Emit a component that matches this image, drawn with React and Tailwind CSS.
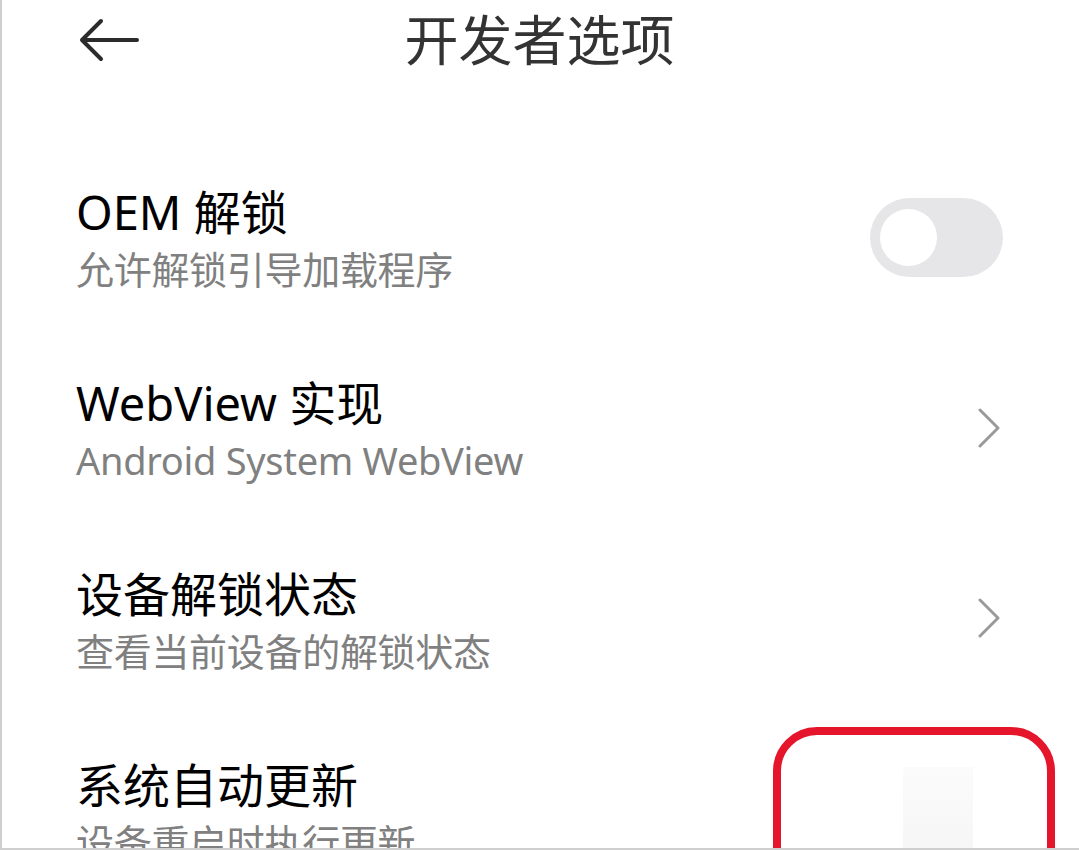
import React from "react";

const FONT = {
  fontFamily: '"Noto Sans", "Noto Sans CJK SC", sans-serif',
};

// Back arrow in header
const BackArrow = () => (
  <svg width="62" height="46" viewBox="0 0 62 46" fill="none">
    <path
      d="M4 23 H59 M4 23 L23 4 M4 23 L23 42"
      stroke="#2b2b2b"
      strokeWidth="4"
      strokeLinecap="round"
      strokeLinejoin="round"
    />
  </svg>
);

const Chevron = () => (
  <svg width="24" height="40" viewBox="0 0 24 40" fill="none">
    <polyline
      points="3,2 21,20 3,38"
      stroke="#9a9a9a"
      strokeWidth="3"
      strokeLinecap="round"
      strokeLinejoin="round"
    />
  </svg>
);

const Toggle = () => (
  <div className="w-[133px] h-[79px] rounded-full bg-[#e6e6e8] flex items-center pl-[10px] -mt-[5px]">
    <div className="w-[57px] h-[57px] rounded-full bg-white" />
  </div>
);

const SettingRow = ({ title, subtitle, right }) => (
  <div className="h-[191px] flex items-center justify-between pl-[74px] pr-[76px]">
    <div className="flex flex-col">
      <span className="text-[47px] leading-[60px] text-black">{title}</span>
      <span className="text-[38px] leading-[55px] text-[#808080] tracking-[-0.3px]">{subtitle}</span>
    </div>
    {right}
  </div>
);

export default function App() {
  return (
    <div
      className="relative w-full h-[850px] overflow-hidden bg-white border-l-2 border-b-2 border-[#cfcfcf]"
      style={FONT}
    >
      {/* Header */}
      <header className="h-[80px] grid grid-cols-[1fr_auto_1fr] items-center">
        <div className="pl-[76px] flex items-center">
          <BackArrow />
        </div>
        <h1 className="text-[54px] leading-[80px] text-[#333333] -ml-[2px]">开发者选项</h1>
        <div />
      </header>

      <main className="mt-[64px]">
        <SettingRow
          title="OEM 解锁"
          subtitle="允许解锁引导加载程序"
          right={<Toggle />}
        />
        <SettingRow
          title="WebView 实现"
          subtitle="Android System WebView"
          right={
            <div className="pr-[2px] -mt-[6px]">
              <Chevron />
            </div>
          }
        />
        <SettingRow
          title="设备解锁状态"
          subtitle="查看当前设备的解锁状态"
          right={
            <div className="pr-[2px] -mt-[8px]">
              <Chevron />
            </div>
          }
        />
        <SettingRow
          title="系统自动更新"
          subtitle="设备重启时执行更新"
          right={
            <div className="self-start mt-[50px] mr-[30px] w-[70px] h-[140px] bg-gradient-to-b from-[#fbfbfb] to-[#f3f3f4]" />
          }
        />
      </main>

      {/* Red annotation box */}
      <div className="absolute left-[771px] top-[727px] w-[282px] h-[200px] rounded-[44px] border-[8px] border-[#e5162b]" />
    </div>
  );
}
